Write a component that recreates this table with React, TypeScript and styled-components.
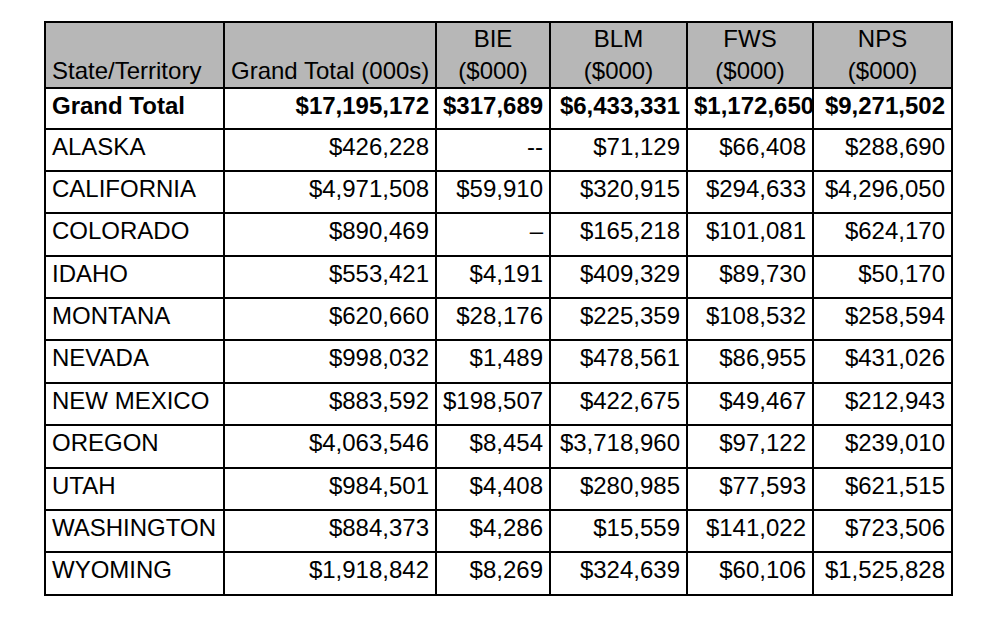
import React from 'react';
import styled, { createGlobalStyle } from 'styled-components';

const GlobalStyle = createGlobalStyle`
  body {
    margin: 0;
    background: #ffffff;
    font-family: "Liberation Sans", Arial, sans-serif;
  }
`

type Row = [string, string, string, string, string, string];

const rows: Row[] = [
  ['ALASKA', '$426,228', '--', '$71,129', '$66,408', '$288,690'],
  ['CALIFORNIA', '$4,971,508', '$59,910', '$320,915', '$294,633', '$4,296,050'],
  ['COLORADO', '$890,469', '–', '$165,218', '$101,081', '$624,170'],
  ['IDAHO', '$553,421', '$4,191', '$409,329', '$89,730', '$50,170'],
  ['MONTANA', '$620,660', '$28,176', '$225,359', '$108,532', '$258,594'],
  ['NEVADA', '$998,032', '$1,489', '$478,561', '$86,955', '$431,026'],
  ['NEW MEXICO', '$883,592', '$198,507', '$422,675', '$49,467', '$212,943'],
  ['OREGON', '$4,063,546', '$8,454', '$3,718,960', '$97,122', '$239,010'],
  ['UTAH', '$984,501', '$4,408', '$280,985', '$77,593', '$621,515'],
  ['WASHINGTON', '$884,373', '$4,286', '$15,559', '$141,022', '$723,506'],
  ['WYOMING', '$1,918,842', '$8,269', '$324,639', '$60,106', '$1,525,828'],
];

const total: Row = ['Grand Total', '$17,195,172', '$317,689', '$6,433,331', '$1,172,650', '$9,271,502'];

const agencies = ['BIE', 'BLM', 'FWS', 'NPS'];
const widths = [179, 212, 114, 137, 126, 139];

export default function App() {
  return (
    <>
      <GlobalStyle />
      <Page>
        <Table>
          <colgroup>
            {widths.map((w, i) => <col key={i} style={{ width: w }} />)}
          </colgroup>
          <thead>
            <tr>
              <HeadCell>State/Territory</HeadCell>
              <HeadCell>Grand Total (000s)</HeadCell>
              {agencies.map(a => (
                <HeadCell key={a} $center>{a}<br />($000)</HeadCell>
              ))}
            </tr>
          </thead>
          <tbody>
            <TotalRow>
              {total.map((v, i) => (
                <Cell key={i} $num={i > 0} $bold>{v}</Cell>
              ))}
            </TotalRow>
            {rows.map(r => (
              <DataRow key={r[0]}>
                {r.map((v, i) => (
                  <Cell key={i} $num={i > 0}>{v}</Cell>
                ))}
              </DataRow>
            ))}
          </tbody>
        </Table>
      </Page>
    </>
  )
}

const Page = styled.div`
  padding: 21px 0 0 44px;
`

const Table = styled.table`
  width: 909px;
  table-layout: fixed;
  border-collapse: collapse;
  border: 2px solid #000;
  font-size: 24px;
  line-height: 32px;
  color: #000;
`

const HeadCell = styled.th<{ $center?: boolean }>`
  height: 64px;
  background: #b7b7b7;
  border: 2px solid #000;
  padding: 0 6px;
  font-weight: normal;
  text-align: ${p => (p.$center ? 'center' : 'left')};
  vertical-align: bottom;
  white-space: nowrap;
`

const TotalRow = styled.tr`
  height: 40.5px;
`

const DataRow = styled.tr`
  height: 42.4px;
`

const Cell = styled.td<{ $num?: boolean; $bold?: boolean }>`
  border: 2px solid #000;
  padding: 1px 6px 0;
  vertical-align: top;
  white-space: nowrap;
  text-align: ${p => (p.$num ? 'right' : 'left')};
  font-weight: ${p => (p.$bold ? 'bold' : 'normal')};
`
